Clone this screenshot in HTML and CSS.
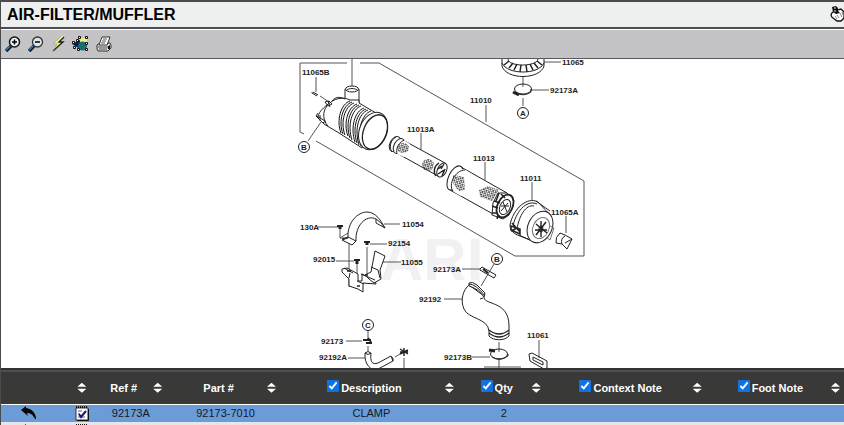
FILE: index.html
```html
<!DOCTYPE html>
<html lang="en">
<head>
<meta charset="utf-8">
<title>AIR-FILTER/MUFFLER</title>
<link rel="stylesheet" href="styles.css">
</head>
<body>
<div class="viewer">
  <header class="titlebar">
    <h1>AIR-FILTER/MUFFLER</h1>
    <button class="tool" type="button" aria-label="Pan">
      <svg width="16" height="18" viewBox="0 0 16 18"><path d="M3 7C0 9 1 12 3 13L7 16H11L14 13V7L11 4L7 5Z" fill="#fff" stroke="#111" stroke-width="1.300"/><path d="M2 2L6 1L8 3V6L10 8L6 9L3 7Z" fill="#111"/><path d="M4 3H6M4 6H6" stroke="#ddd"/><path d="M7 10L9 13M10 8L12 12M12 7L13 10M5 11L7 14" stroke="#888"/></svg>
    </button>
  </header>

  <nav class="toolbar" aria-label="Drawing tools">
    <button class="tool" type="button" aria-label="Zoom in">
      <svg width="16" height="16" viewBox="0 0 16 16"><path d="M1 15L6 10" stroke="#10202c" stroke-width="3.6"/><path d="M1 14L5 10" stroke="#3d78c0" stroke-width="1.6"/><circle cx="9.5" cy="6" r="5" fill="#eef4f4" stroke="#111" stroke-width="1.5"/><path d="M7 6H12M9.500 3.500V8.500" stroke="#000" stroke-width="1.5"/></svg>
    </button>
    <button class="tool" type="button" aria-label="Zoom out">
      <svg width="16" height="16" viewBox="0 0 16 16"><path d="M1 15L6 10" stroke="#10202c" stroke-width="3.600"/><path d="M1 14L5 10" stroke="#3d78c0" stroke-width="1.6"/><circle cx="9.5" cy="6" r="5" fill="#dfe5e6" stroke="#333" stroke-width="1.3"/><path d="M7 6H12" stroke="#000" stroke-width="1.5"/></svg>
    </button>
    <button class="tool" type="button" aria-label="Hotspots">
      <svg width="14" height="16" viewBox="1 0 14 16"><path d="M11 0L3 8H7L3 15L13 6H9L14 1Z" fill="#f3f36a" stroke="#fff" stroke-width=".6"/><path d="M14 1L9 6H13L3 15" fill="none" stroke="#222" stroke-width="1.400"/><path d="M11 0L3 8H7L3 15" fill="none" stroke="#888" stroke-width=".7"/></svg>
    </button>
    <button class="tool" type="button" aria-label="Select objects">
      <svg width="17" height="16" viewBox="0 0 17 16"><path d="M8 2H15V8H8Z" fill="#f0ee8c"/><path d="M0 8L8 4V13Z" fill="#10185c"/><circle cx="10.500" cy="10" r="4.500" fill="#176d70"/><g fill="#fff" stroke="#111"><path d="M6.500 .5h2v2h-2zM13.500 .5h2v2h-2zM.5 5.500h2v2h-2zM4.500 3.500h2v2h-2zM13.500 6.500h2v2h-2zM1.500 10.500h2v2h-2zM5.500 12.500h2v2h-2zM13.500 12.500h2v2h-2z"/></g></svg>
    </button>
    <button class="tool" type="button" aria-label="Print">
      <svg width="16" height="16" viewBox="0 0 16 16"><path d="M1 9L4 7H14L15 9V12L12 15H2L1 13Z" fill="#ddd" stroke="#333"/><path d="M6 1H14L11 9H3Z" fill="#fff" stroke="#333"/><path d="M7 3H11M6 5H10M5 7H9" stroke="#555"/><path d="M2 11H12L14 9M3 13H11" fill="none" stroke="#555"/><path d="M13 10V13" stroke="#111" stroke-width="2"/></svg>
    </button>
  </nav>

  <main class="drawing">
    <svg viewBox="1 59 843 309" role="img" aria-label="Exploded parts drawing">
      <defs>
        <pattern id="mesh" width="3" height="3" patternUnits="userSpaceOnUse" patternTransform="rotate(28)"><path d="M0 0L3 3M3 0L0 3" stroke="#333" stroke-width=".8"/></pattern>
      </defs>
      <text class="watermark" x="380" y="280">ARI</text>

      <!-- assembly boundary -->
      <g class="thin">
        <path d="M347 63H300V132L304 134M360 63H379L584 181V256H515L316 141"/>
        <path d="M352 59V88M486 105V122M421 133V150M485 162V180M532 182V200M566 216V233M316 77V92M320 96L329 102M321 122L308 141"/>
        <path d="M543 62H561M531 90H549M523 76V87M523 98V106"/>
      </g>

      <!-- muffler body -->
      <g class="line">
        <path class="fill" d="M345 89V103H359V89"/>
        <path class="fill" d="M350 100C344 97 336 98 331 102L327 105C322 109 318 113 318 118L324 124L339 133L362 148L376 113L359 103V100Z"/>
        <ellipse class="fill" cx="352" cy="89" rx="6.500" ry="3"/>
        <path d="M347 90C349 88 355 88 357 90M327 106C322 112 323 121 328 126M332 101C336 96 341 97 345 99"/>
        <path d="M325 102l4-1 3 3-4 2zM328 101l2 6"/>
        <path d="M318 113l-2 3 7 7 3-2M317 116l8 5M320 115v6"/>
        <path d="M312 93l5 3M313 92l5 3M312 93v-1"/>
      </g>
      <g class="rib">
        <path d="M350 101c-9 3-14 19-9 32"/><path d="M352 102c-9 3-14 19-9 32"/><path d="M354 103c-9 3-14 19-9 32"/><path d="M357 104c-9 3-14 19-9 32"/><path d="M359 105c-9 3-14 19-9 33"/><path d="M361 106c-9 3-14 19-9 34"/><path d="M364 108c-9 3-14 19-9 34"/><path d="M366 109c-9 3-14 19-9 34"/><path d="M368 110c-9 3-14 19-9 35"/><path d="M371 111c-9 3-14 19-10 35"/>
      </g>
      <g class="line">
        <ellipse class="fill" cx="373" cy="131" rx="13.500" ry="19.500" transform="rotate(22 373 131)"/>
        <ellipse cx="375" cy="132" rx="11.500" ry="18" transform="rotate(22 375 132)" stroke-width="1.3"/>
      </g>

      <!-- inner element -->
      <g class="line">
        <path class="fill" d="M399 138L446 163L439 178L391 151Z" stroke="none"/>
        <path d="M401 139L445 163M393 151L438 176"/>
        <ellipse class="fill" cx="395" cy="144" rx="5" ry="8" transform="rotate(27 395 144)"/>
        <ellipse class="fill" cx="399" cy="146" rx="5" ry="8" transform="rotate(27 399 146)"/>
        <path class="fill" d="M404 140C398 143 395 150 397 154L404 157L410 144Z" stroke="none"/>
        <path d="M396 137C390 140 389 148 392 152M404 140C397 144 396 150 397 154"/>
        <ellipse cx="403" cy="148" rx="6" ry="5" fill="url(#mesh)" stroke="none"/>
        <ellipse cx="428" cy="165" rx="6" ry="6" fill="url(#mesh)" stroke="none"/>
        <ellipse class="fill" cx="442" cy="170" rx="4.500" ry="7.500" transform="rotate(26 442 170)"/>
        <path d="M439 163C434 166 433 172 436 176M438 169l4-3m-4 8l6-4m-2 6l3-7m-1-5l-3 5" stroke-width="1.400"/>
      </g>

      <!-- outer element -->
      <g class="line">
        <path class="fill" d="M459 167L509 193L495 217L448 189Z" stroke="none"/>
        <path d="M461 167L507 193M450 190L493 214"/>
        <ellipse class="fill" cx="455" cy="178" rx="6.500" ry="13" transform="rotate(25 455 178)"/>
        <path class="fill" d="M464 169C454 169 447 185 454 192L461 196L472 174Z" stroke="none"/>
        <path d="M465 170C455 170 448 185 453 191"/>
        <path d="M453 175L464 177L465 190L459 191Q451 184 453 175Z" fill="url(#mesh)" stroke="none"/>
        <path d="M479 190L488 186L499 190L492 201L480 197Z" fill="url(#mesh)" stroke="none"/>
        <path class="fill" d="M498 193L507 193L514 200L509 215L503 219L492 215L493 203Z"/>
        <ellipse class="fill" cx="505" cy="206" rx="7.500" ry="12" transform="rotate(25 505 206)" stroke-width="1.800"/>
        <ellipse cx="505" cy="207" rx="5" ry="8" transform="rotate(25 505 207)"/>
        <path d="M503 202l4 10M508 203l-7 8M501 206h8"/>
        <path d="M499 193l-3 8m4 2l-6-2m4 7l-6-2m4 7l-4 0m6 2l-1 4m4-25l4 4" stroke-width="1.500"/>
      </g>

      <!-- end cover -->
      <g class="line">
        <path class="fill" d="M538 202C527 196 513 209 510 225C510 231 514 234 520 236L538 243L551 216Z"/>
        <path d="M537 204C526 199 515 213 513 227M534 206C526 204 519 216 517 229"/>
        <path d="M536 201L550 211M519 235L534 242"/>
        <ellipse class="fill" cx="540" cy="227" rx="12" ry="16.500" transform="rotate(25 540 227)"/>
        <ellipse cx="541" cy="228" rx="8" ry="11" transform="rotate(25 541 228)" stroke="#777"/>
        <ellipse cx="541" cy="229" rx="2" ry="3"/>
        <path d="M541 221v16M536 224l11 9M546 222l-10 13M535 230h12" stroke-width="1.400"/>
        <path d="M511 226l9 3v5l-9-4zM511 231l6-3m-5-5l8 9" stroke-width="1.500"/>
        <path d="M550 226l4 2-4 12-4-3" stroke="#777"/>
        <path class="fill" d="M560 233l5 2 7 4-5 10-5-5-6-1q-1-6 4-10zM565 236q-5 3-3 8M565 243l7-4"/>
      </g>

      <!-- precleaner and its clamp -->
      <g class="line">
        <path class="fill" d="M502 59V66C506 80 540 80 544 66V59"/>
        <path d="M502 63C507 75 539 75 544 63M508 59C508 67 537 67 538 59"/>
        <path d="M509 61l-5 4M513 63l-4 5M517 64l-3 6M521 65l-1 7M526 65l1 7M530 64l3 6M534 63l4 5M537 61l5 4" stroke-width="1.500"/>
        <ellipse cx="523" cy="89" rx="8.500" ry="5"/><path d="M516 93q8 4 15-1v-3"/><path d="M513 92l6 3" stroke-width="3"/>
      </g>

      <!-- strap and bracket -->
      <g class="thin">
        <path d="M318 227H338M384 224H400M370 244H387M336 261H354M382 262H401M349 242V287M367 247V275M357 264V279M340 229V238H345M340 238L348 233"/>
      </g>
      <g class="line">
        <path class="fill" d="M348 238C347 222 358 212 367 212C376 212 381 221 385 228L376 223L376 219C366 214 355 226 356 241L352 245L342 240Z"/>
        <path d="M342 239l6-2 8 4M376 219q5 3 9 9"/>
        <path d="M340 225v4M367 241v4M357 260v4" stroke-width="3"/>
        <path d="M337 226h6M364 242h6M354 260h6" stroke-width="2"/>
        <path class="fill" d="M342 269l5-1 11 6v7h4v-7l13 6 1 4-13-1v9l-5-3-9-3v-7l-7-7z"/>
        <path class="fill" d="M365 275l6-3 4-21 10 5-5 14 1 9-7 4-5-4z"/>
        <path d="M371 267l7 3 2 8M344 268l9 5M350 273l-1 5M361 274l14 6M357 281l7 3"/>
        <path d="M347 271h4M365 275h3M357 286h3" stroke-width="1.500"/>
      </g>

      <!-- intake elbow -->
      <g class="thin"><path d="M462 269H480M494 264L481 286M444 299H462M499 342V352M499 358V368M472 357H490M484 367H521M539 340V358"/></g>
      <g class="line">
        <path d="M480 269l2-2 14 8-2 3-14-8zM484 269l3 4"/><path d="M483 269l5 4" stroke-width="2"/>
        <path class="fill" d="M469 285C463 290 460 300 464 309C468 319 488 318 489 331V336C493 341 505 341 509 336V326C509 299 482 306 484 296Z"/>
        <path class="fill" d="M469 283q3-2 8 2l8 8-1 4q-5-8-15-11z"/>
        <path d="M469 284q7 0 16 12M480 299l3-1"/>
        <path d="M489 330q10 8 20 0M489 333q10 8 20 0" stroke-width="1.300"/>
        <ellipse cx="499" cy="354" rx="8.500" ry="5"/><path d="M492 357q8 5 16-1v-2"/><path d="M489 350l6 1" stroke-width="3"/>
        <path d="M529 354l3-1 15 8v7l-3 1-14-8zM533 357l10 5v3l-10-5z"/>
      </g>

      <!-- drain hose -->
      <g class="thin"><path d="M368 331V339M346 341H362M368 346V351M348 358H365M395 357L400 354M404 358V368"/></g>
      <g class="line">
        <path d="M363 340h8M366 343h6M368 338l3 4" stroke-width="2"/>
        <path d="M365 353V357C366 368 374 372 380 368L393 361L391 356L378 363C372 365 370 362 371 353"/>
        <path d="M365 353q3-3 6 0-3 3-6 0M391 357q3 0 2 4"/>
        <path d="M400 349l8 5M400 354l8-4M404 348v8M400 352h8" stroke-width="1.400"/>
      </g>

      <g class="balloon">
        <circle cx="304" cy="147" r="5.500"/><circle cx="523" cy="113" r="5.500"/><circle cx="497" cy="259" r="5.500"/><circle cx="368" cy="325" r="5.500"/>
      </g>
      <g class="callouts">
        <text class="mid" x="304" y="150">B</text><text class="mid" x="523" y="116">A</text><text class="mid" x="497" y="262">B</text><text class="mid" x="368" y="328">C</text>
        <text x="302" y="75">11065B</text>
        <text x="470" y="103">11010</text>
        <text x="407" y="132">11013A</text>
        <text x="473" y="161">11013</text>
        <text x="520" y="181">11011</text>
        <text x="551" y="215">11065A</text>
        <text x="562" y="65">11065</text>
        <text x="550" y="93">92173A</text>
        <text x="300" y="230">130A</text>
        <text x="402" y="227">11054</text>
        <text x="388" y="246">92154</text>
        <text x="313" y="262">92015</text>
        <text x="401" y="265">11055</text>
        <text x="433" y="272">92173A</text>
        <text x="419" y="302">92192</text>
        <text x="321" y="344">92173</text>
        <text x="319" y="360">92192A</text>
        <text x="444" y="360">92173B</text>
        <text x="527" y="338">11061</text>
      </g>
    </svg>
  </main>

  <table class="parts">
    <colgroup><col class="c-undo"><col class="c-note"><col class="c-ref"><col class="c-part"><col class="c-desc"><col class="c-qty"><col class="c-context"><col class="c-foot"></colgroup>
    <thead>
      <tr>
        <th></th>
        <th><div class="head"><span class="label"></span><button class="sort" type="button" aria-label="Sort by note"></button></div></th>
        <th><div class="head"><span class="label">Ref #</span><button class="sort" type="button" aria-label="Sort by ref"></button></div></th>
        <th><div class="head"><span class="label">Part #</span><button class="sort" type="button" aria-label="Sort by part"></button></div></th>
        <th><div class="head"><label class="label"><input type="checkbox" checked>Description</label><button class="sort" type="button" aria-label="Sort by description"></button></div></th>
        <th><div class="head"><label class="label"><input type="checkbox" checked>Qty</label><button class="sort" type="button" aria-label="Sort by quantity"></button></div></th>
        <th><div class="head"><label class="label"><input type="checkbox" checked>Context Note</label><button class="sort" type="button" aria-label="Sort by context note"></button></div></th>
        <th><div class="head"><label class="label"><input type="checkbox" checked>Foot Note</label><button class="sort" type="button" aria-label="Sort by foot note"></button></div></th>
      </tr>
    </thead>
    <tbody>
      <tr class="selected">
        <td><button class="tool" type="button" aria-label="Return part"><svg width="16" height="14" viewBox="0 0 16 14"><path d="M0 4L5 0V2C11 3 15 7 15 13H14C12 9 10 7 6 7L7 10Z" fill="#050505"/></svg></button></td>
        <td class="note"><button class="tool" type="button" aria-label="Edit note"><svg width="14" height="15" viewBox="0 0 14 15"><path d="M1 2H13V14H1Z" fill="#fff" stroke="#333"/><path d="M1 1H13" stroke="#111" stroke-width="2" stroke-dasharray="1 1"/><path d="M2 14.500H13.500V3" fill="none" stroke="#111"/><path d="M3 5H7M3 8H5M3 11H10" stroke="#557"/><path d="M4 8L6 11L11 5" fill="none" stroke="#151580" stroke-width="2"/></svg></button></td>
        <td>92173A</td><td>92173-7010</td><td>CLAMP</td><td>2</td><td></td><td></td>
      </tr>
      <tr>
        <td><button class="tool" type="button" aria-label="Return part"><svg width="16" height="14" viewBox="0 0 16 14"><path d="M0 4L5 0V2C11 3 15 7 15 13H14C12 9 10 7 6 7L7 10Z" fill="#050505"/></svg></button></td>
        <td class="note"><button class="tool" type="button" aria-label="Edit note"><svg width="14" height="15" viewBox="0 0 14 15"><path d="M1 2H13V14H1Z" fill="#fff" stroke="#333"/><path d="M1 1H13" stroke="#111" stroke-width="2" stroke-dasharray="1 1"/></svg></button></td>
        <td></td><td></td><td></td><td></td><td></td><td></td>
      </tr>
    </tbody>
  </table>
</div>
</body>
</html>
```
FILE: styles.css
```css
* { box-sizing: border-box; }
html { height: 100%; overflow: hidden; }
body {
  margin: 0;
  font-family: "Liberation Sans", Arial, sans-serif;
  font-size: 11px;
  color: #000;
  background: #fff;
}
.viewer { border-top: 2px solid #4b4b4d; border-left: 1px solid #4b4b4d; }
.titlebar {
  display: flex;
  align-items: center;
  justify-content: space-between;
  height: 27px;
  padding-left: 6px;
  background: #eef0f0;
  border-bottom: 2px solid #4d4d4f;
}
.titlebar h1 { margin: 0; font-size: 16px; line-height: 24px; font-weight: bold; }
.titlebar .tool { margin: 0 -2px 2px 0; }
.toolbar {
  display: flex;
  align-items: center;
  gap: 7px;
  height: 30px;
  padding-left: 4px;
  background: #c4c3c5;
  border-top: 1px solid #fff;
  border-bottom: 1px solid #59595b;
}
.tool { display: block; padding: 0; border: 0; background: none; }
.tool svg { display: block; }
.drawing svg { display: block; width: 100%; }
.thin { fill: none; stroke: #555; stroke-width: 1; }
.line { fill: none; stroke: #222; stroke-width: 1; }
.fill { fill: #fff; }
.rib { fill: none; stroke: #111; stroke-width: 1; }
.balloon { fill: #fff; stroke: #222; stroke-width: 1; }
.callouts { font-size: 8px; font-weight: bold; fill: #222; }
.mid { text-anchor: middle; }
.watermark { font-size: 60px; font-weight: bold; fill: #f1f1f3; }

.parts {
  width: 100%;
  table-layout: fixed;
  border-collapse: collapse;
  text-align: center;
}
.c-undo { width: 6.600%; }
.c-note { width: 4%; }
.c-ref { width: 9%; }
.c-part { width: 13.500%; }
.c-desc { width: 21.100%; }
.c-qty { width: 10.300%; }
.c-context { width: 19.100%; }
.c-foot { width: 16.400%; }
.parts th, .parts td { padding: 0; }
.parts thead { background: #393937; color: #fff; }
.parts th { height: 35px; border-top: 2px solid #333335; border-bottom: 1px solid #fff; box-shadow: inset 0 2px #4d4e50; }
.head { display: flex; align-items: center; padding: 2px 4px 0; }
.label { flex: 1; display: flex; align-items: center; justify-content: center; gap: 2px; white-space: nowrap; }
.label input { width: 12px; height: 12px; margin: 0 0 4px; accent-color: #0b72e8; }
.sort {
  position: relative;
  width: 9px;
  height: 10px;
  padding: 0;
  border: 0;
  background: #fff;
  clip-path: polygon(50% 0, 100% 40%, 0 40%, 0 60%, 100% 60%, 50% 100%, 0 60%, 0 40%);
}
.parts td { height: 18px; padding-left: 5px; background: #e4e6ea; color: #111a2c; }
.parts td:first-child { padding-left: 0; }
.parts .selected td { background: #6b9cd6; border-bottom: 1px solid #e4e6ea; }
.parts td .tool { margin: 0 auto; }
.parts .note { padding-left: 18px; }
.parts .note .tool { margin: 0; }
```
